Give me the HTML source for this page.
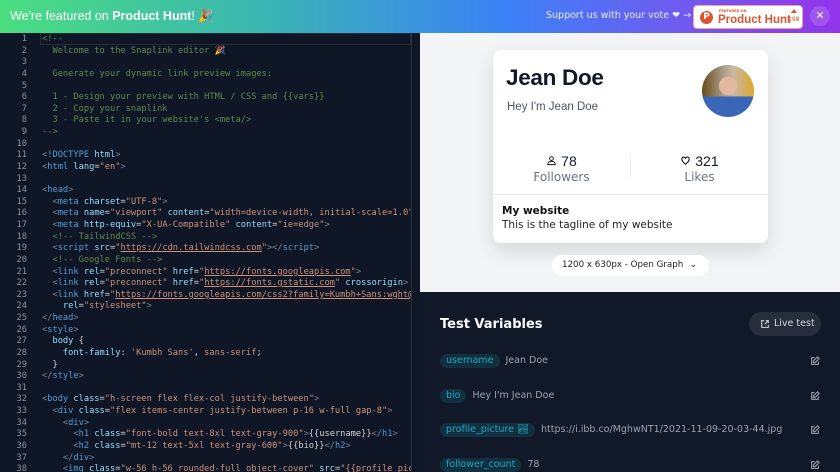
<!DOCTYPE html>
<html><head><meta charset="utf-8"><style>
*{margin:0;padding:0;box-sizing:border-box}
body{width:840px;height:472px;overflow:hidden;background:#111827;font-family:"DejaVu Sans","Liberation Sans",sans-serif;position:relative}
.ban{position:absolute;left:0;top:0;width:840px;height:33px;background:linear-gradient(90deg,#4ade80 0%,#3bb7b0 30%,#3b82f6 60%,#6d5cf0 80%,#9333ea 100%);color:#fff}
.ban .l{position:absolute;left:10px;top:9px;font-size:12.5px;font-family:"Liberation Sans",sans-serif}
.ban .r{position:absolute;left:546px;top:10px;font-size:9.5px;color:#e8ecff;white-space:nowrap}
.ph{position:absolute;left:693px;top:5px;width:110px;height:24px;background:#fff;border:1px solid #f3a38f;border-radius:4px}
.ph .c{position:absolute;left:6px;top:5px;width:13px;height:13px;border-radius:50%;background:#da552f;color:#fff;font-size:9px;font-weight:bold;text-align:center;line-height:13px}
.ph .f{position:absolute;left:25px;top:3px;font-size:3.5px;color:#da552f;font-weight:bold}
.ph .n{position:absolute;left:24px;top:8px;font-size:11.5px;color:#da552f;font-weight:bold;font-family:"Liberation Sans",sans-serif}
.ph .v{position:absolute;left:94px;top:10px;font-size:6px;color:#da552f}
.ph .t{position:absolute;left:97px;top:3px;width:0;height:0;border-left:3px solid transparent;border-right:3px solid transparent;border-bottom:4px solid #da552f}
.x{position:absolute;left:810px;top:6px;width:20px;height:20px;border-radius:50%;background:rgba(255,255,255,.15);color:#fff;text-align:center;font-size:11px;line-height:20px}
.ed{position:absolute;left:0;top:33px;width:420px;height:439px;background:#0f1626;overflow:hidden}
.ln{position:absolute;left:0;top:1px;width:27px;text-align:right;font-family:"DejaVu Sans Mono",monospace;font-size:8.7px;line-height:11.62px;color:#8b93a1}
.code{position:absolute;left:42px;top:1px;width:370px;overflow:hidden;white-space:pre;font-family:"DejaVu Sans Mono",monospace;font-size:8.7px;line-height:11.62px;color:#d4d4d4}
.cm{color:#5f8a4c}.t{color:#569cd6}.g{color:#7f848e}.a{color:#9cdcfe}.s{color:#ce9178}.u{color:#ce9178;text-decoration:underline}.p{color:#d4d4d4}
.sb{position:absolute;left:411px;top:33px;width:1px;height:439px;background:#2a3140}
.hl{position:absolute;left:40px;top:33px;width:371px;height:12px;border:1px solid #262b35}
.pv{position:absolute;left:420px;top:33px;width:420px;height:259px;background:#f3f4f6}
.card{position:absolute;left:73px;top:17px;width:275px;height:193px;background:#fff;border-radius:8px;box-shadow:0 8px 20px rgba(0,0,0,.12)}
.nm{position:absolute;left:13px;top:15px;font-size:22.5px;font-weight:bold;color:#111827;font-family:"Liberation Sans",sans-serif;letter-spacing:-.3px}
.bio{position:absolute;left:14px;top:51px;font-size:11.5px;color:#4b5563;font-family:"Liberation Sans",sans-serif}
.av{position:absolute;left:209px;top:15px;width:52px;height:52px;border-radius:50%;background:radial-gradient(circle at 50% 40%,#e0b9a0 0 22%,transparent 23%),linear-gradient(180deg,transparent 60%,#3a67b5 61%),linear-gradient(90deg,#6b4a18 0%,#a89a86 40%,#c8b8a6 60%,#d9a82a 100%)}
.st{position:absolute;top:103px;width:137px;text-align:center}
.st .v{font-size:14px;color:#111827;font-family:"Liberation Sans",sans-serif}
.st .k{font-size:12px;color:#6b7280;margin-top:1px}
.dv{position:absolute;left:137px;top:105px;width:1px;height:22px;background:#eee}
.ft{position:absolute;left:0;top:144px;width:275px;border-top:1px solid #e5e7eb;padding:10px 9px}
.ft b{display:block;font-size:10.5px;color:#111}
.ft span{display:block;font-size:10.5px;color:#222;margin-top:2px}
.dd{position:absolute;left:132px;top:222px;width:157px;height:21px;background:#fff;border-radius:11px;font-size:8.7px;color:#222;line-height:21px;padding-left:10px}
.vars{position:absolute;left:420px;top:292px;width:420px;height:180px;background:#111827}
.tv{position:absolute;left:20px;top:25px;font-size:13px;font-weight:bold;color:#fff}
.lt{position:absolute;left:329px;top:20px;width:72px;height:24px;border-radius:12px;background:#262d3b;color:#d1d5db;font-size:9.5px;line-height:24px;padding-left:25px;white-space:nowrap}
.row{position:absolute;left:20px;font-size:9.5px;color:#9ca3af;height:14px;line-height:14px;white-space:nowrap}
.tag{display:inline-block;background:#13303f;color:#1ba8c6;border-radius:7px;padding:0 6px;margin-right:6px}
.ei{position:absolute;left:390px}
</style></head><body>
<div class="ban"><div class="l">We're featured on <b>Product Hunt</b>! 🎉</div>
<div class="r">Support us with your vote ❤ →</div>
<div class="ph"><div class="c">P</div><div class="f">FEATURED ON</div><div class="n">Product Hunt</div><div class="t"></div><div class="v">198</div></div>
<div class="x">✕</div></div>
<div class="ed">
<div class="hl" style="top:0;left:40px"></div>
<div class="ln">1<br>2<br>3<br>4<br>5<br>6<br>7<br>8<br>9<br>10<br>11<br>12<br>13<br>14<br>15<br>16<br>17<br>18<br>19<br>20<br>21<br>22<br>23<br>24<br>25<br>26<br>27<br>28<br>29<br>30<br>31<br>32<br>33<br>34<br>35<br>36<br>37<br>38</div>
<div class="code"><span class="cm">&lt;!--
  Welcome to the Snaplink editor 🎉

  Generate your dynamic link preview images:

  1 - Design your preview with HTML / CSS and {{vars}}
  2 - Copy your snaplink
  3 - Paste it in your website's &lt;meta/&gt;
--&gt;</span>

<span class="g">&lt;</span><span class="t">!DOCTYPE</span> <span class="a">html</span><span class="g">&gt;</span>
<span class="g">&lt;</span><span class="t">html</span> <span class="a">lang</span>=<span class="s">"en"</span><span class="g">&gt;</span>

<span class="g">&lt;</span><span class="t">head</span><span class="g">&gt;</span>
  <span class="g">&lt;</span><span class="t">meta</span> <span class="a">charset</span>=<span class="s">"UTF-8"</span><span class="g">&gt;</span>
  <span class="g">&lt;</span><span class="t">meta</span> <span class="a">name</span>=<span class="s">"viewport"</span> <span class="a">content</span>=<span class="s">"width=device-width, initial-scale=1.0"</span><span class="g">&gt;</span>
  <span class="g">&lt;</span><span class="t">meta</span> <span class="a">http-equiv</span>=<span class="s">"X-UA-Compatible"</span> <span class="a">content</span>=<span class="s">"ie=edge"</span><span class="g">&gt;</span>
  <span class="cm">&lt;!-- TailwindCSS --&gt;</span>
  <span class="g">&lt;</span><span class="t">script</span> <span class="a">src</span>=<span class="s">"</span><span class="u">https://cdn.tailwindcss.com</span><span class="s">"</span><span class="g">&gt;&lt;/</span><span class="t">script</span><span class="g">&gt;</span>
  <span class="cm">&lt;!-- Google Fonts --&gt;</span>
  <span class="g">&lt;</span><span class="t">link</span> <span class="a">rel</span>=<span class="s">"preconnect"</span> <span class="a">href</span>=<span class="s">"</span><span class="u">https://fonts.googleapis.com</span><span class="s">"</span><span class="g">&gt;</span>
  <span class="g">&lt;</span><span class="t">link</span> <span class="a">rel</span>=<span class="s">"preconnect"</span> <span class="a">href</span>=<span class="s">"</span><span class="u">https://fonts.gstatic.com</span><span class="s">"</span> <span class="a">crossorigin</span><span class="g">&gt;</span>
  <span class="g">&lt;</span><span class="t">link</span> <span class="a">href</span>=<span class="s">"</span><span class="u">https://fonts.googleapis.com/css2?family=Kumbh+Sans:wght@100;200</span>
    <span class="a">rel</span>=<span class="s">"stylesheet"</span><span class="g">&gt;</span>
<span class="g">&lt;/</span><span class="t">head</span><span class="g">&gt;</span>
<span class="g">&lt;</span><span class="t">style</span><span class="g">&gt;</span>
  <span class="a">body</span> {
    <span class="a">font-family</span>: <span class="s">'Kumbh Sans'</span>, <span class="s">sans-serif</span>;
  }
<span class="g">&lt;/</span><span class="t">style</span><span class="g">&gt;</span>

<span class="g">&lt;</span><span class="t">body</span> <span class="a">class</span>=<span class="s">"h-screen flex flex-col justify-between"</span><span class="g">&gt;</span>
  <span class="g">&lt;</span><span class="t">div</span> <span class="a">class</span>=<span class="s">"flex items-center justify-between p-16 w-full gap-8"</span><span class="g">&gt;</span>
    <span class="g">&lt;</span><span class="t">div</span><span class="g">&gt;</span>
      <span class="g">&lt;</span><span class="t">h1</span> <span class="a">class</span>=<span class="s">"font-bold text-8xl text-gray-900"</span><span class="g">&gt;</span>{{username}}<span class="g">&lt;/</span><span class="t">h1</span><span class="g">&gt;</span>
      <span class="g">&lt;</span><span class="t">h2</span> <span class="a">class</span>=<span class="s">"mt-12 text-5xl text-gray-600"</span><span class="g">&gt;</span>{{bio}}<span class="g">&lt;/</span><span class="t">h2</span><span class="g">&gt;</span>
    <span class="g">&lt;/</span><span class="t">div</span><span class="g">&gt;</span>
    <span class="g">&lt;</span><span class="t">img</span> <span class="a">class</span>=<span class="s">"w-56 h-56 rounded-full object-cover"</span> <span class="a">src</span>=<span class="s">"{{profile_picture}}"</span></div>
</div>
<div class="sb"></div>
<div class="pv">
<div class="card">
<div class="nm">Jean Doe</div><div class="bio">Hey I'm Jean Doe</div>
<div class="av"></div>
<div class="st" style="left:0"><div class="v"><svg width="11" height="11" viewBox="0 0 24 24" fill="none" stroke="#111" stroke-width="2"><circle cx="12" cy="8" r="4"/><path d="M4 21v-1a6 6 0 0 1 6-6h4a6 6 0 0 1 6 6v1z"/></svg> 78</div><div class="k">Followers</div></div>
<div class="dv"></div>
<div class="st" style="left:138px"><div class="v"><svg width="11" height="11" viewBox="0 0 24 24" fill="none" stroke="#111" stroke-width="2.3"><path d="M12 20s-8-5-8-11a4 4 0 0 1 8-1 4 4 0 0 1 8 1c0 6-8 11-8 11z"/></svg> 321</div><div class="k">Likes</div></div>
<div class="ft"><b>My website</b><span>This is the tagline of my website</span></div>
</div>
<div class="dd">1200 x 630px - Open Graph <span style="position:absolute;right:12px;top:0;font-size:9px">⌄</span></div>
</div>
<div class="vars">
<div class="tv">Test Variables</div>
<div class="lt"><svg style="position:absolute;left:11px;top:7px" width="10" height="10" viewBox="0 0 24 24" fill="none" stroke="#d1d5db" stroke-width="2.5"><path d="M10 4H4v16h16v-6M14 4h6v6M20 4l-9 9"/></svg>Live test</div>
<div class="row" style="top:62px"><span class="tag">username</span>Jean Doe</div>
<div class="row" style="top:97px"><span class="tag">bio</span>Hey I'm Jean Doe</div>
<div class="row" style="top:131px"><span class="tag">profile_picture 🏞</span>https://i.ibb.co/MghwNT1/2021-11-09-20-03-44.jpg</div>
<div class="row" style="top:166px"><span class="tag">follower_count</span>78</div>
<svg class="ei" style="top:64px" width="10" height="10" viewBox="0 0 24 24" fill="none" stroke="#9ca3af" stroke-width="2.5"><path d="M11 4H4v16h16v-7M18 2l4 4-10 10H8v-4z"/></svg>
<svg class="ei" style="top:99px" width="10" height="10" viewBox="0 0 24 24" fill="none" stroke="#9ca3af" stroke-width="2.5"><path d="M11 4H4v16h16v-7M18 2l4 4-10 10H8v-4z"/></svg>
<svg class="ei" style="top:133px" width="10" height="10" viewBox="0 0 24 24" fill="none" stroke="#9ca3af" stroke-width="2.5"><path d="M11 4H4v16h16v-7M18 2l4 4-10 10H8v-4z"/></svg>
<svg class="ei" style="top:168px" width="10" height="10" viewBox="0 0 24 24" fill="none" stroke="#9ca3af" stroke-width="2.5"><path d="M11 4H4v16h16v-7M18 2l4 4-10 10H8v-4z"/></svg>
</div>
</body></html>
